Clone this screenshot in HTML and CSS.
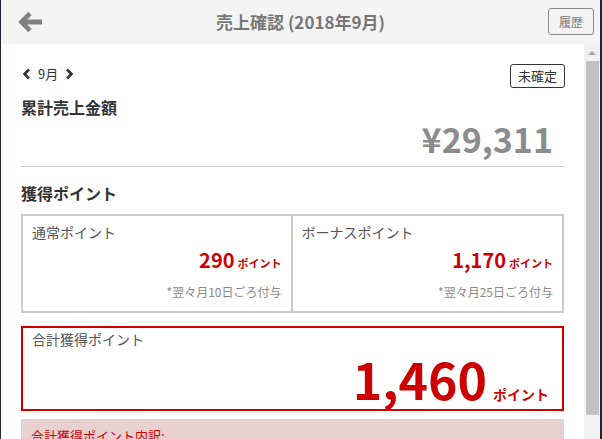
FILE: index.html
```html
<!DOCTYPE HTML>
<html>
	<head>
		<meta http-equiv="Content-Type" content="text/html; charset=UTF-8" />
		<title>売上確認</title>
		<link rel="stylesheet" href="styles.css">
	</head>
	<body>
		<div class="window">
			<div class="header">
				<div class="back">
					<svg width="24" height="22" viewBox="0 0 24 22">
						<path d="M12 2.5 L3.5 11 L12 19.5" fill="none" stroke="#808080" stroke-width="4.6" stroke-linejoin="miter"/>
						<path d="M4 11 H24" stroke="#808080" stroke-width="5"/>
					</svg>
				</div>
				<div class="title">売上確認 (2018年9月)</div>
				<div class="header_right">
					<span class="history_btn">履歴</span>
				</div>
			</div>
			<div class="main">
				<div class="content">
					<div class="month_row">
						<div class="month_nav">
							<svg width="9" height="12" viewBox="0 0 9 12"><path d="M7 1.5 L2.5 6 L7 10.5" fill="none" stroke="#333" stroke-width="2.6"/></svg>
							<span class="month">9月</span>
							<svg width="9" height="12" viewBox="0 0 9 12"><path d="M2 1.5 L6.5 6 L2 10.5" fill="none" stroke="#333" stroke-width="2.6"/></svg>
						</div>
						<span class="status">未確定</span>
					</div>
					<h2 class="section_title">累計売上金額</h2>
					<div class="amount">¥29,311</div>
					<hr class="line">
					<h2 class="section_title section_title--points">獲得ポイント</h2>
					<div class="point_grid">
						<div class="point_box">
							<div class="point_label">通常ポイント</div>
							<div class="point_value">290<span class="unit">ポイント</span></div>
							<div class="point_note">*翌々月10日ごろ付与</div>
						</div>
						<div class="point_box">
							<div class="point_label">ボーナスポイント</div>
							<div class="point_value">1,170<span class="unit">ポイント</span></div>
							<div class="point_note">*翌々月25日ごろ付与</div>
						</div>
					</div>
					<div class="total_box">
						<div class="point_label">合計獲得ポイント</div>
						<div class="total_value">1,460<span class="total_unit">ポイント</span></div>
					</div>
					<div class="detail_box">
						<div class="detail_title">合計獲得ポイント内訳:</div>
					</div>
				</div>
				<div class="scrollbar">
					<div class="scroll_up"></div>
					<div class="scroll_thumb"></div>
				</div>
			</div>
		</div>
	</body>
</html>
```

FILE: styles.css
```css
html, body {
	margin: 0;
	padding: 0;
}
body {
	background: #1d2a36;
	font-family: "Noto Sans CJK JP", "Noto Sans", sans-serif;
	color: #333;
	height: 439px;
	overflow: hidden;
}
.window {
	margin: 0 2px 0 1px;
	height: 439px;
	background: #fff;
	display: flex;
	flex-direction: column;
	overflow: hidden;
}
.header {
	height: 44px;
	flex-shrink: 0;
	background: #f4f4f4;
	display: grid;
	grid-template-columns: 1fr auto 1fr;
	align-items: center;
}
.back {
	padding-left: 17px;
	display: flex;
	align-items: center;
}
.title {
	font-size: 17px;
	font-weight: bold;
	color: #777;
	line-height: 20px;
}
.header_right {
	display: flex;
	justify-content: flex-end;
	padding-right: 6px;
}
.history_btn {
	display: block;
	width: 44px;
	height: 25px;
	border: 1px solid #8a8a8a;
	border-radius: 3px;
	font-size: 12px;
	line-height: 25px;
	text-align: center;
	color: #777;
	margin-top: -2px;
}
.main {
	flex: 1;
	display: flex;
	min-height: 0;
}
.content {
	flex: 1;
	padding: 20px 20px 0 20px;
	overflow: hidden;
}
.month_row {
	display: flex;
	justify-content: space-between;
	align-items: center;
	height: 24px;
}
.month_nav {
	display: flex;
	align-items: center;
	gap: 7px;
	padding-bottom: 4px;
	padding-left: 1px;
}
.month {
	font-size: 13px;
	line-height: 16px;
}
.status {
	display: block;
	border: 1px solid #333;
	border-radius: 3px;
	font-size: 13px;
	line-height: 22px;
	padding: 0 7px;
	margin-right: -1px;
}
.section_title {
	margin: 7px 0 0 0;
	font-size: 16px;
	line-height: 24px;
	font-weight: bold;
}
.amount {
	text-align: right;
	font-size: 34px;
	font-weight: bold;
	color: #8c8c8c;
	line-height: 40px;
	padding-right: 11px;
	margin-top: 0;
}
.line {
	border: none;
	border-top: 1px solid #ccc;
	margin: 7px 0 0 0;
}
.section_title--points {
	margin-top: 14px;
}
.point_grid {
	margin-top: 9px;
	display: grid;
	grid-template-columns: 1fr 1fr;
	border: 2px solid #ccc;
	height: 95px;
}
.point_box {
	padding: 6px 9px 0 9px;
}
.point_box:first-child {
	border-right: 2px solid #ccc;
}
.point_label {
	font-size: 14px;
	line-height: 20px;
	color: #555;
}
.point_value {
	text-align: right;
	font-size: 20px;
	font-weight: bold;
	color: #c00;
	line-height: 24px;
	margin-top: 6px;
}
.unit {
	font-size: 11px;
	margin-left: 3px;
}
.point_note {
	text-align: right;
	font-size: 12px;
	color: #888;
	line-height: 16px;
	margin-top: 9px;
}
.total_box {
	margin-top: 13px;
	border: 2px solid #c00;
	padding: 1px 9px 0 9px;
	box-sizing: border-box;
	height: 85px;
}
.total_value {
	text-align: right;
	font-size: 50px;
	font-weight: bold;
	color: #c00;
	line-height: 52px;
	margin-top: 3px;
	padding-right: 4px;
}
.total_unit {
	font-size: 14px;
	margin-left: 6px;
}
.detail_box {
	margin-top: 8px;
	background: #e9d1d1;
	padding: 8px 10px;
	height: 60px;
}
.detail_title {
	font-size: 13px;
	color: #c00;
	line-height: 18px;
}
.scrollbar {
	width: 16px;
	background: #f1f1f1;
	position: relative;
}
.scroll_up {
	position: absolute;
	top: 7px;
	left: 4px;
	width: 0;
	height: 0;
	border-left: 4px solid transparent;
	border-right: 4px solid transparent;
	border-bottom: 4px solid #a3a3a3;
}
.scroll_thumb {
	position: absolute;
	top: 17px;
	left: 2px;
	width: 13px;
	height: 354px;
	background: #c1c1c1;
}
```
